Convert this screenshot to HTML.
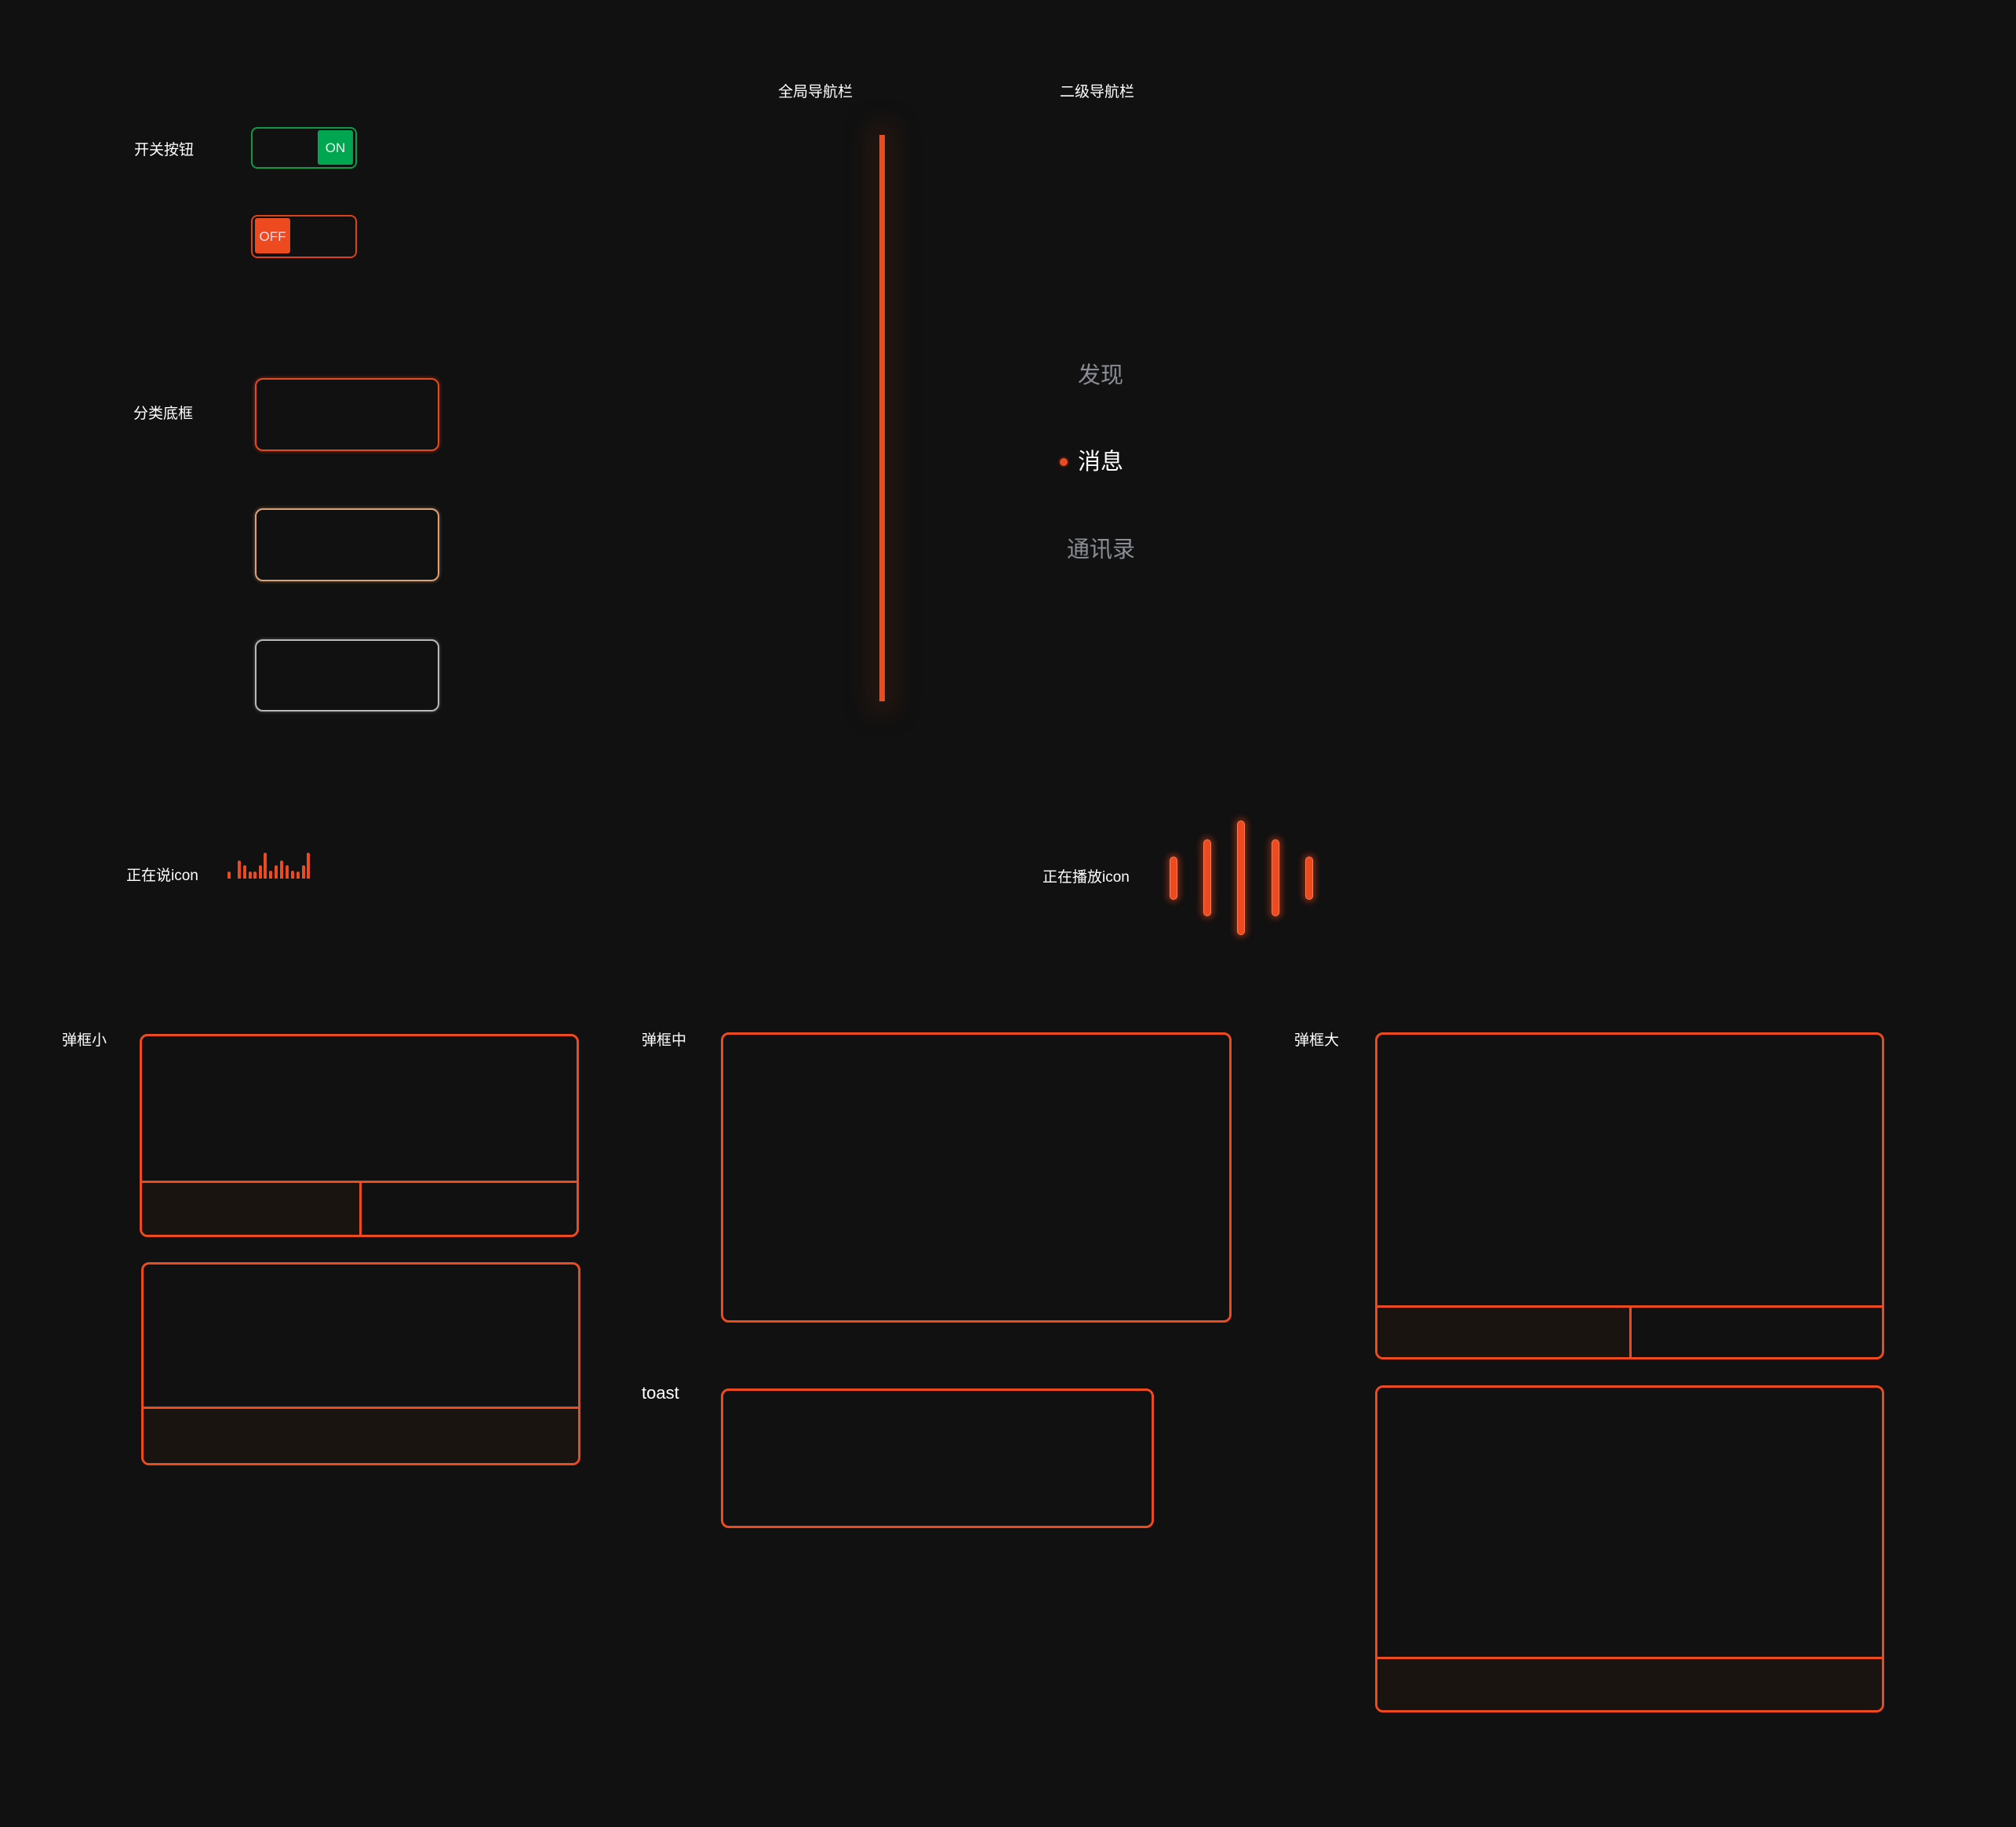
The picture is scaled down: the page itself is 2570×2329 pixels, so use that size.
<!DOCTYPE html>
<html><head><meta charset="utf-8"><style>
html,body{margin:0;padding:0;background:#111111;}
body{width:2570px;height:2329px;position:relative;overflow:hidden;font-family:"Liberation Sans","Noto Sans CJK SC",sans-serif;color:#fff;}
.a{position:absolute;}
.lbl{position:absolute;font-size:19px;line-height:24px;color:#fff;white-space:nowrap;}
.dlg{position:absolute;border:3px solid #ee4a20;border-radius:10px;box-sizing:border-box;overflow:hidden;background:#111;}
.hl{position:absolute;left:0;right:0;height:3px;background:#ee4a20;}
.vl{position:absolute;width:3px;background:#ee4a20;}
.foot{position:absolute;background:#1a1411;}
.sb{position:absolute;width:4px;background:#ee4a20;border-radius:2px 2px 0 0;bottom:1209px;}
.pb{position:absolute;width:8px;background:#ee4a20;border:1px solid #ff7a50;border-radius:6px;box-shadow:0 0 8px 3px rgba(238,74,32,.45);}
</style></head><body>

<div class="lbl" style="left:171px;top:180px">开关按钮</div>
<div class="a" style="left:320px;top:162px;width:135px;height:53px;border:2px solid #0f9a4a;border-radius:8px;box-sizing:border-box"></div>
<div class="a" style="left:405px;top:166px;width:45px;height:44px;background:#00a650;border-radius:3px;font-size:17px;line-height:46px;text-align:center;color:#e8f5ec">ON</div>
<div class="a" style="left:320px;top:274px;width:135px;height:55px;border:2px solid #d8431c;border-radius:8px;box-sizing:border-box"></div>
<div class="a" style="left:325px;top:278px;width:45px;height:45px;background:#ee4a20;border-radius:3px;font-size:17px;line-height:47px;text-align:center;color:#fde">OFF</div>

<div class="lbl" style="left:170px;top:516px">分类底框</div>
<div class="a" style="left:325px;top:482px;width:235px;height:93px;border:2px solid #e24a20;border-radius:10px;box-sizing:border-box;box-shadow:0 0 5px rgba(238,74,32,.6)"></div>
<div class="a" style="left:325px;top:648px;width:235px;height:93px;border:2px solid #dba276;border-radius:10px;box-sizing:border-box;box-shadow:0 0 5px rgba(219,162,118,.5)"></div>
<div class="a" style="left:325px;top:815px;width:235px;height:92px;border:2px solid #b8b8b8;border-radius:10px;box-sizing:border-box;box-shadow:0 0 4px rgba(200,200,200,.4)"></div>

<div class="lbl" style="left:992px;top:106px">全局导航栏</div>
<div class="lbl" style="left:1351px;top:106px">二级导航栏</div>
<div class="a" style="left:1121px;top:172px;width:7px;height:722px;background:#ee4a20;box-shadow:0 0 30px 14px rgba(80,35,15,.35)"></div>

<div class="a" style="left:1374px;top:461px;font-size:29px;line-height:36px;color:#8a8d94">发现</div>
<div class="a" style="left:1351px;top:584px;width:10px;height:10px;border-radius:50%;background:#ee4a20;box-shadow:0 0 5px rgba(238,74,32,.6)"></div>
<div class="a" style="left:1374px;top:571px;font-size:29px;line-height:36px;color:#fff">消息</div>
<div class="a" style="left:1360px;top:683px;font-size:29px;line-height:36px;color:#8a8d94">通讯录</div>

<div class="lbl" style="left:161px;top:1105px">正在说icon</div>
<div class="sb" style="left:290px;height:9px"></div>
<div class="sb" style="left:303px;height:23px"></div>
<div class="sb" style="left:310px;height:17px"></div>
<div class="sb" style="left:317px;height:9px"></div>
<div class="sb" style="left:323px;height:9px"></div>
<div class="sb" style="left:330px;height:17px"></div>
<div class="sb" style="left:336px;height:33px"></div>
<div class="sb" style="left:343px;height:10px"></div>
<div class="sb" style="left:350px;height:17px"></div>
<div class="sb" style="left:357px;height:23px"></div>
<div class="sb" style="left:364px;height:17px"></div>
<div class="sb" style="left:371px;height:10px"></div>
<div class="sb" style="left:378px;height:9px"></div>
<div class="sb" style="left:385px;height:17px"></div>
<div class="sb" style="left:391px;height:33px"></div>

<div class="lbl" style="left:1329px;top:1107px">正在播放icon</div>
<div class="pb" style="left:1491px;top:1092px;height:53px"></div>
<div class="pb" style="left:1534px;top:1070px;height:96px"></div>
<div class="pb" style="left:1577px;top:1046px;height:144px"></div>
<div class="pb" style="left:1621px;top:1070px;height:96px"></div>
<div class="pb" style="left:1664px;top:1092px;height:53px"></div>

<div class="lbl" style="left:79px;top:1315px">弹框小</div>
<div class="dlg" style="left:178px;top:1318px;width:560px;height:259px">
  <div class="foot" style="left:0;top:187px;width:280px;bottom:0"></div>
  <div class="hl" style="top:184px"></div>
  <div class="vl" style="left:277px;top:184px;bottom:0"></div>
</div>
<div class="dlg" style="left:180px;top:1609px;width:560px;height:259px">
  <div class="foot" style="left:0;right:0;top:184px;bottom:0"></div>
  <div class="hl" style="top:181px"></div>
</div>

<div class="lbl" style="left:818px;top:1315px">弹框中</div>
<div class="dlg" style="left:919px;top:1316px;width:651px;height:370px"></div>

<div class="lbl" style="left:818px;top:1764px;font-size:22px">toast</div>
<div class="dlg" style="left:919px;top:1770px;width:552px;height:178px"></div>

<div class="lbl" style="left:1650px;top:1315px">弹框大</div>
<div class="dlg" style="left:1753px;top:1316px;width:649px;height:417px">
  <div class="foot" style="left:0;top:348px;width:324px;bottom:0"></div>
  <div class="hl" style="top:345px"></div>
  <div class="vl" style="left:321px;top:345px;bottom:0"></div>
</div>
<div class="dlg" style="left:1753px;top:1766px;width:649px;height:417px">
  <div class="foot" style="left:0;right:0;top:346px;bottom:0"></div>
  <div class="hl" style="top:343px"></div>
</div>

</body></html>
